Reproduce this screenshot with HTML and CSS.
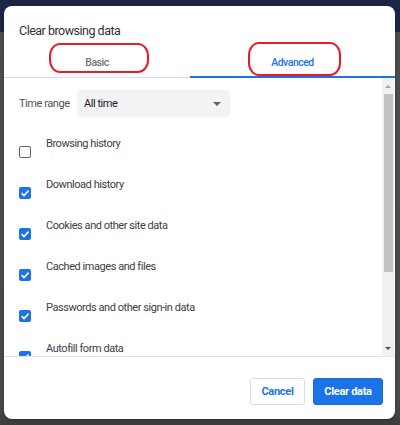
FILE: index.html
```html
<!DOCTYPE html>
<html>
<head>
<meta charset="utf-8">
<link rel="stylesheet" href="styles.css">
</head>
<body>
<div class="backdrop">
  <div class="dialog">
    <div class="title">Clear browsing data</div>
    <div class="tabs">
      <div class="tab tab-basic">Basic</div>
      <div class="tab tab-adv">Advanced</div>
    </div>
    <div class="body">
      <div class="content">
        <div class="range">
          <span class="range-label">Time range</span>
          <div class="select"><span>All time</span><span class="caret"></span></div>
        </div>
        <div class="row">
          <span class="box"></span>
          <div class="text"><div class="label">Browsing history</div><div class="sub">.</div></div>
        </div>
        <div class="row">
          <span class="box on"><svg viewBox="0 0 12 12"><path d="M2.6 6.2 L5 8.5 L9.6 3.6" /></svg></span>
          <div class="text"><div class="label">Download history</div></div>
        </div>
        <div class="row">
          <span class="box on"><svg viewBox="0 0 12 12"><path d="M2.6 6.2 L5 8.5 L9.6 3.6" /></svg></span>
          <div class="text"><div class="label">Cookies and other site data</div></div>
        </div>
        <div class="row">
          <span class="box on"><svg viewBox="0 0 12 12"><path d="M2.6 6.2 L5 8.5 L9.6 3.6" /></svg></span>
          <div class="text"><div class="label">Cached images and files</div></div>
        </div>
        <div class="row">
          <span class="box on"><svg viewBox="0 0 12 12"><path d="M2.6 6.2 L5 8.5 L9.6 3.6" /></svg></span>
          <div class="text"><div class="label">Passwords and other sign-in data</div></div>
        </div>
        <div class="row">
          <span class="box on"><svg viewBox="0 0 12 12"><path d="M2.6 6.2 L5 8.5 L9.6 3.6" /></svg></span>
          <div class="text"><div class="label">Autofill form data</div></div>
        </div>
      </div>
      <div class="scrollbar">
        <span class="arrow-up"></span>
        <div class="thumb"></div>
        <div class="track-rest"></div>
        <span class="arrow-down"></span>
      </div>
    </div>
    <div class="footer">
      <button class="btn cancel">Cancel</button>
      <button class="btn primary">Clear data</button>
    </div>
    <div class="mark mark-basic"></div>
    <div class="mark mark-adv"></div>
  </div>
</div>
</body>
</html>
```

FILE: styles.css
```css
* { box-sizing: border-box; }
html, body { margin: 0; padding: 0; }
body {
  width: 400px;
  height: 425px;
  overflow: hidden;
  font-family: Roboto, "Noto Sans", sans-serif;
  background: linear-gradient(to bottom, #1c2544 0, #1c2544 32px, #4c4c4c 32px, #4a4a4a 400px, #3c3c3c 425px);
}
.backdrop {
  padding: 6px 5px 6px 4px;
}
.dialog {
  position: relative;
  width: 391px;
  height: 413px;
  background: #fff;
  border-radius: 8px;
  display: flex;
  flex-direction: column;
  box-shadow: 0 1px 3px rgba(0,0,0,0.3);
}
.title {
  padding: 17px 0 0 15px;
  height: 40px;
  font-size: 12.5px;
  color: #303134;
  letter-spacing: -0.5px;
}
.tabs {
  display: flex;
  height: 32px;
}
.tab {
  display: flex;
  align-items: center;
  justify-content: center;
  font-size: 10.5px;
  font-weight: 500;
  letter-spacing: -0.5px;
  padding-top: 2px;
}
.tab-basic {
  width: 186px;
  color: #707377;
  border-bottom: 1px solid #dadce0;
}
.tab-adv {
  flex: 1;
  color: #1a73e8;
  border-bottom: 2px solid #1a73e8;
}
.body {
  display: flex;
  height: 279px;
  border-bottom: 1px solid #e2e3e5;
}
.content {
  flex: 1;
  overflow: hidden;
  padding: 12px 0 0 15px;
}
.range {
  display: flex;
  align-items: center;
  height: 27px;
}
.range-label {
  width: 58px;
  font-size: 11px;
  color: #505357;
  letter-spacing: -0.45px;
}
.select {
  width: 153px;
  height: 27px;
  background: #f1f3f4;
  border-radius: 4px;
  display: flex;
  align-items: center;
  justify-content: space-between;
  padding: 0 9px 0 7px;
  font-size: 11px;
  color: #202124;
  letter-spacing: -0.45px;
}
.caret {
  width: 0;
  height: 0;
  border-left: 4px solid transparent;
  border-right: 4px solid transparent;
  border-top: 4px solid #5f6368;
}
.row {
  display: flex;
  height: 41px;
}
.range + .row { margin-top: 13px; }
.box {
  width: 12px;
  height: 12px;
  margin-top: 16px;
  border: 1.5px solid #5f6368;
  border-radius: 2px;
  flex: none;
}
.box.on {
  border: none;
  background: #1a73e8;
}
.box svg {
  display: block;
  width: 12px;
  height: 12px;
}
.box svg path {
  fill: none;
  stroke: #fff;
  stroke-width: 1.6;
}
.text {
  margin-left: 15px;
  padding-top: 7px;
}
.label {
  font-size: 11px;
  line-height: 14px;
  color: #3c4043;
  letter-spacing: -0.45px;
}
.sub {
  font-size: 7px;
  line-height: 10px;
  color: #b0b0b0;
  padding-left: 5px;
}
.scrollbar {
  width: 12px;
  margin-right: 1px;
  background: #f1f1f1;
  display: flex;
  flex-direction: column;
  align-items: center;
}
.arrow-up {
  margin-top: 7px;
  width: 0;
  height: 0;
  border-left: 3px solid transparent;
  border-right: 3px solid transparent;
  border-bottom: 3px solid #a3a3a3;
}
.thumb {
  margin-top: 6px;
  width: 9px;
  height: 178px;
  background: #c1c1c1;
}
.track-rest { flex: 1; }
.arrow-down {
  margin-bottom: 6px;
  width: 0;
  height: 0;
  border-left: 3px solid transparent;
  border-right: 3px solid transparent;
  border-top: 3px solid #505050;
}
.footer {
  flex: 1;
  display: flex;
  justify-content: flex-end;
  align-items: flex-start;
  gap: 8px;
  padding: 21px 12px 0 0;
}
.btn {
  height: 27px;
  border-radius: 3px;
  font-family: Roboto, "Noto Sans", sans-serif;
  font-size: 11px;
  font-weight: 700;
  letter-spacing: -0.3px;
  padding: 0;
}
.cancel {
  width: 55px;
  background: #fff;
  color: #1a73e8;
  border: 1px solid #dadce0;
}
.primary {
  width: 70px;
  background: #1a73e8;
  color: #fff;
  border: 1px solid #1a6bd8;
}
.mark {
  position: absolute;
  border: 2px solid #e41e26;
  border-radius: 11px / 13px;
}
.mark-basic {
  left: 45px;
  top: 37px;
  width: 100px;
  height: 30px;
}
.mark-adv {
  left: 244px;
  top: 36px;
  width: 93px;
  height: 34px;
}
```
